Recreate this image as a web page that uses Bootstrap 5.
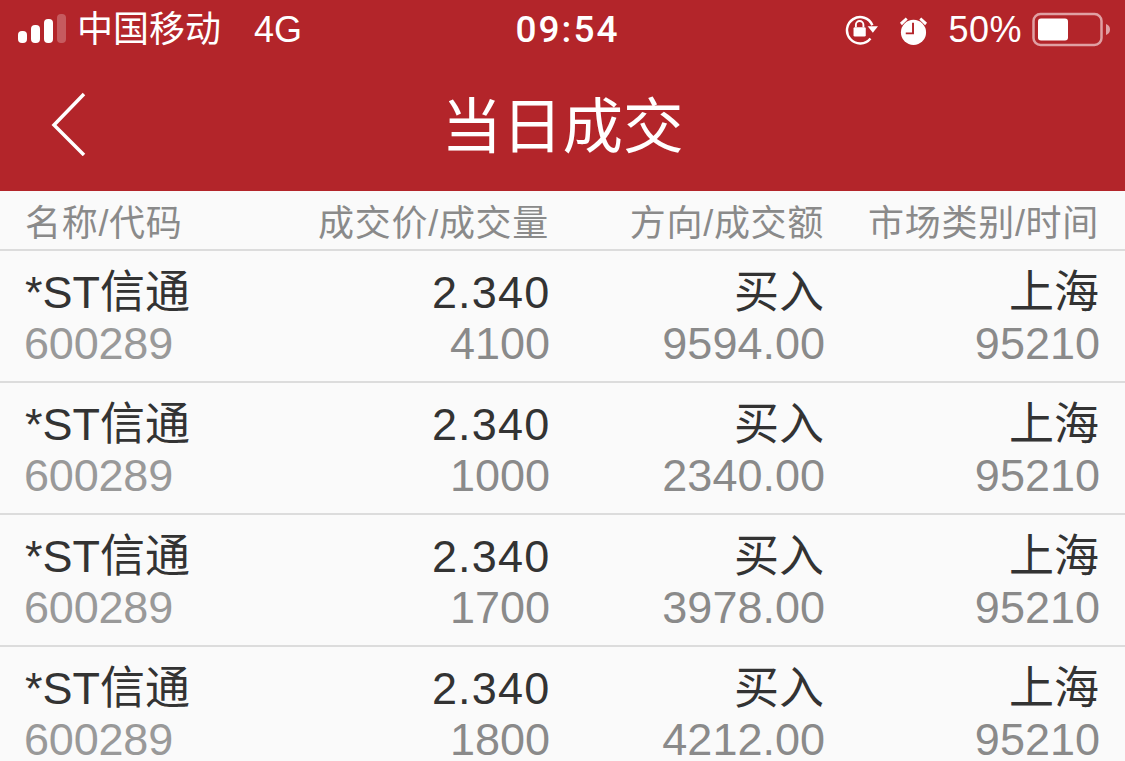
<!DOCTYPE html>
<html lang="zh"><head><meta charset="utf-8"><title>当日成交</title>
<link href="https://cdn.jsdelivr.net/npm/bootstrap@5.3.0/dist/css/bootstrap.min.css" rel="stylesheet">
<style>
html,body{height:761px;overflow:hidden}
body{background:#fafafa;font-family:"Liberation Sans","Noto Sans CJK SC",sans-serif;color:#333}
.topbar{background:#b3252a;color:#fff;height:191px}
.statusline{height:60px;padding:0 15px 0 18px;font-size:36px;line-height:60px}
.stat-left,.stat-right{width:400px}
.sigbars{height:29px;margin-bottom:3px}
.sig{width:9px;background:#fff;border-radius:4px;display:block}
.sig-1{height:12px}.sig-2{height:18px}.sig-3{height:24px}.sig-4{height:29px;opacity:.25}
.clock{font-family:Roboto,"Liberation Sans",sans-serif;font-weight:500;font-size:37px;letter-spacing:2px;margin-left:7px}
.carrier{margin-left:11px}
.net{font-size:36px;margin-left:33px}
.pct{font-size:36px;margin:0 10px 0 0;letter-spacing:.5px}
.ico-rot{margin-right:20px}
.ico-alarm{margin-right:20px}
.titleline{height:131px;position:relative}
.ttl{font-size:60.500px;line-height:131px;padding-top:2px}
.backbtn{position:absolute;left:50px;top:32px}
.hdrrow,.datarow{padding:0 25px;border-bottom:2px solid #dcdcdc}
.hdrrow{height:60px;font-size:36px;line-height:66px;color:#8a8a8a;letter-spacing:.7px}
.datarow{height:132px;padding-top:16px}
.c1{width:249px}.c2{width:275px}.c3{width:275px}.c4{width:275px}
.c2,.c3,.c4{text-align:right}
.nm{font-size:45px;line-height:51px;color:#333;white-space:nowrap}
.sb{font-size:45px;line-height:51px;color:#999;white-space:nowrap}
.c1 .sb{margin-left:-1px;letter-spacing:-.2px}
.c2 .sb,.c3 .sb,.c4 .sb{color:#8a8a8a;margin-right:-1px}
.c2 .nm{letter-spacing:1.200px;margin-right:-1.500px}
.hdrrow>div{white-space:nowrap}
</style></head>
<body>
<div class="topbar">
 <div class="statusline d-flex justify-content-between align-items-center">
  <div class="stat-left d-flex align-items-center">
   <span class="sigbars d-flex align-items-end gap-1">
    <i class="sig sig-1"></i><i class="sig sig-2"></i><i class="sig sig-3"></i><i class="sig sig-4"></i>
   </span>
   <span class="carrier">中国移动</span><span class="net">4G</span>
  </div>
  <div class="clock">09:54</div>
  <div class="stat-right d-flex align-items-center justify-content-end">
   <svg class="ico-rot" width="34" height="32" viewBox="0 0 36 34"><path d="M29 12A14 14 0 1 0 27 26" fill="none" stroke="#fff" stroke-width="2.6"/><path d="M24 13h11l-5.500 7z" fill="#fff"/><rect x="9" y="14" width="13" height="10" rx="1.500" fill="#fff"/><path d="M11.500 14v-2.500a4 4 0 0 1 8 0V14" fill="none" stroke="#fff" stroke-width="2"/></svg>
   <svg class="ico-alarm" width="29" height="31" viewBox="0 0 30 32"><circle cx="15" cy="18" r="13" fill="#fff"/><path d="M14.500 8v11H7" fill="none" stroke="#b3252a" stroke-width="2"/><path d="M1 8l6-5.500 2 2-6 6zM29 8l-6-5.500-2 2 6 6z" fill="#fff"/></svg>
   <span class="pct">50%</span>
   <svg width="78" height="36" viewBox="0 0 78 36"><rect x="1.500" y="2" width="68" height="31" rx="7" fill="none" stroke="#e0a0a3" stroke-width="2.500"/><rect x="6" y="6.500" width="30" height="22" rx="3" fill="#fff"/><path d="M74 12c3 1 4 3 4 5.500s-1 4.500-4 5.500z" fill="#e0a0a3"/></svg>
  </div>
 </div>
 <div class="titleline text-center">
  <svg class="backbtn" width="36" height="64" viewBox="0 0 36 64"><path d="M34 2L4 33l30 30" fill="none" stroke="#fff" stroke-width="3.500"/></svg>
  <div class="ttl">当日成交</div>
 </div>
</div>
<div class="hdrrow d-flex">
 <div class="c1">名称/代码</div><div class="c2">成交价/成交量</div><div class="c3">方向/成交额</div><div class="c4">市场类别/时间</div>
</div>
<div class="datarow d-flex">
 <div class="c1"><div class="nm">*ST信通</div><div class="sb">600289</div></div>
 <div class="c2"><div class="nm">2.340</div><div class="sb">4100</div></div>
 <div class="c3"><div class="nm">买入</div><div class="sb">9594.00</div></div>
 <div class="c4"><div class="nm">上海</div><div class="sb">95210</div></div>
</div>
<div class="datarow d-flex">
 <div class="c1"><div class="nm">*ST信通</div><div class="sb">600289</div></div>
 <div class="c2"><div class="nm">2.340</div><div class="sb">1000</div></div>
 <div class="c3"><div class="nm">买入</div><div class="sb">2340.00</div></div>
 <div class="c4"><div class="nm">上海</div><div class="sb">95210</div></div>
</div>
<div class="datarow d-flex">
 <div class="c1"><div class="nm">*ST信通</div><div class="sb">600289</div></div>
 <div class="c2"><div class="nm">2.340</div><div class="sb">1700</div></div>
 <div class="c3"><div class="nm">买入</div><div class="sb">3978.00</div></div>
 <div class="c4"><div class="nm">上海</div><div class="sb">95210</div></div>
</div>
<div class="datarow d-flex">
 <div class="c1"><div class="nm">*ST信通</div><div class="sb">600289</div></div>
 <div class="c2"><div class="nm">2.340</div><div class="sb">1800</div></div>
 <div class="c3"><div class="nm">买入</div><div class="sb">4212.00</div></div>
 <div class="c4"><div class="nm">上海</div><div class="sb">95210</div></div>
</div>
<script src="https://cdn.jsdelivr.net/npm/bootstrap@5.3.0/dist/js/bootstrap.bundle.min.js"></script>
</body></html>
